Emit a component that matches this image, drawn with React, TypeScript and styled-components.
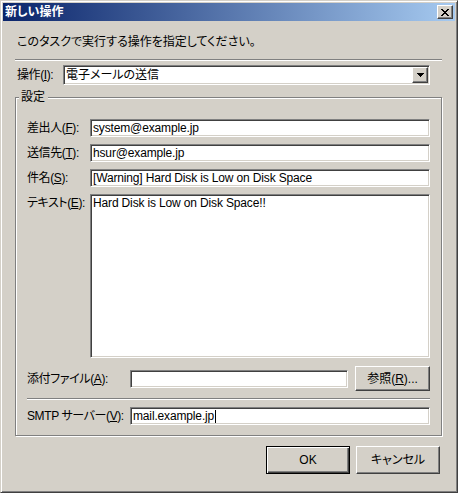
import styled, { createGlobalStyle } from "styled-components";

const GlobalStyle = createGlobalStyle`
  html, body {
    margin: 0;
    padding: 0;
    background: #D4D0C8;
    overflow: hidden;
  }
  body {
    font-family: "Liberation Sans", "Noto Sans CJK JP", sans-serif;
    font-size: 12px;
    font-feature-settings: "palt";
    color: #000;
  }
`;

const raised = `
  border: 1px solid;
  border-color: #FFFFFF #404040 #404040 #FFFFFF;
  box-shadow: inset -1px -1px 0 #808080, inset 1px 1px 0 #D4D0C8;
  background: #D4D0C8;
`;

const sunken = `
  border: 1px solid;
  border-color: #808080 #FFFFFF #FFFFFF #808080;
  box-shadow: inset 1px 1px 0 #404040, inset -1px -1px 0 #D4D0C8;
  background: #FFFFFF;
`;

const Window = styled.div`
  width: 458px;
  height: 493px;
  box-sizing: border-box;
  background: #D4D0C8;
  border: 1px solid;
  border-color: #D4D0C8 #404040 #404040 #D4D0C8;
  box-shadow: inset 1px 1px 0 #FFFFFF, inset -1px -1px 0 #808080;
  padding: 2px;
  display: flex;
  flex-direction: column;
`;

const TitleBar = styled.div`
  height: 18px;
  flex-shrink: 0;
  display: flex;
  align-items: center;
  justify-content: space-between;
  padding: 0 2px;
  background: linear-gradient(to right, #0A246A, #A6CAF0);
`;

const TitleText = styled.span`
  color: #FFFFFF;
  font-weight: bold;
  font-size: 12px;
  line-height: 14px;
`;

const CloseButton = styled.div`
  ${raised}
  width: 16px;
  height: 14px;
  box-sizing: border-box;
  display: flex;
  align-items: center;
  justify-content: center;
`;

const Body = styled.div`
  display: flex;
  flex-direction: column;
  padding: 14px 13px 0 12px;
`;

const Instruction = styled.div`
  line-height: 14px;
  padding-left: 2px;
`;

const Separator = styled.div<{ $top: number }>`
  height: 0;
  margin-top: ${(p) => p.$top}px;
  border-top: 1px solid #808080;
  border-bottom: 1px solid #FFFFFF;
`;

const ActionRow = styled.div`
  display: flex;
  align-items: center;
  height: 20px;
  margin-top: 4px;
  padding-left: 2px;
  padding-right: 12px;
`;

const Label = styled.div<{ $width: number; $top?: number }>`
  width: ${(p) => p.$width}px;
  flex-shrink: 0;
  line-height: 14px;
  white-space: nowrap;
  letter-spacing: -0.4px;
  padding-top: ${(p) => p.$top ?? 0}px;
  & u {
    text-underline-offset: 1px;
  }
`;

const Combo = styled.div`
  ${sunken}
  flex: 1;
  height: 20px;
  box-sizing: border-box;
  display: flex;
  align-items: center;
  padding: 1px 1px 1px 2px;
`;

const ComboText = styled.span`
  flex: 1;
  line-height: 14px;
`;

const DropButton = styled.div`
  ${raised}
  width: 16px;
  height: 16px;
  box-sizing: border-box;
  display: flex;
  align-items: center;
  justify-content: center;
`;

const Group = styled.div`
  position: relative;
  margin-top: 12px;
  border: 1px solid #808080;
  box-shadow: inset 1px 1px 0 #FFFFFF, 1px 1px 0 #FFFFFF;
  padding: 21px 11px 10px 11px;
  display: flex;
  flex-direction: column;
  gap: 7px;
`;

const Legend = styled.div`
  position: absolute;
  top: -8px;
  left: 3px;
  padding: 0 3px 0 2px;
  background: #D4D0C8;
  line-height: 14px;
`;

const FieldRow = styled.div<{ $height: number; $start?: boolean; $after?: number }>`
  display: flex;
  align-items: ${(p) => (p.$start ? "flex-start" : "center")};
  height: ${(p) => p.$height}px;
  margin-bottom: ${(p) => p.$after ?? 0}px;
`;

const TextBox = styled.div<{ $width?: number }>`
  ${sunken}
  ${(p) => (p.$width ? `width: ${p.$width}px;` : "flex: 1;")}
  height: 18px;
  box-sizing: border-box;
  padding: 0 2px;
  display: flex;
  align-items: center;
  white-space: nowrap;
  overflow: hidden;
  line-height: 14px;
  letter-spacing: -0.15px;
`;

const TextArea = styled.div`
  ${sunken}
  flex: 1;
  height: 164px;
  box-sizing: border-box;
  padding: 1px 2px;
  line-height: 14px;
  letter-spacing: -0.15px;
`;

const Caret = styled.span`
  display: inline-block;
  width: 1px;
  height: 13px;
  background: #000;
  margin-left: 1px;
`;

const PushButton = styled.div<{ $width: number; $height: number; $default?: boolean }>`
  ${raised}
  width: ${(p) => p.$width}px;
  height: ${(p) => p.$height}px;
  box-sizing: border-box;
  display: flex;
  align-items: center;
  justify-content: center;
  line-height: 14px;
  flex-shrink: 0;
  ${(p) =>
    p.$default
      ? `border: 1px solid #000;
         box-shadow: inset 1px 1px 0 #FFFFFF, inset -1px -1px 0 #404040, inset -2px -2px 0 #808080;`
      : ""}
  & u {
    text-underline-offset: 1px;
  }
`;

const BrowseGap = styled.div`
  width: 7px;
  flex-shrink: 0;
`;

const ButtonRow = styled.div`
  display: flex;
  justify-content: flex-end;
  gap: 6px;
  margin-top: 10px;
  padding-right: 2px;
`;

const CloseGlyph = () => (
  <svg width="8" height="7" viewBox="0 0 8 7" shapeRendering="crispEdges">
    <path
      d="M0 0h2v1H0zM6 0h2v1H6zM1 1h2v1H1zM5 1h2v1H5zM2 2h4v1H2zM3 3h2v1H3zM2 4h4v1H2zM1 5h2v1H1zM5 5h2v1H5zM0 6h2v1H0zM6 6h2v1H6z"
      fill="#000"
    />
  </svg>
);

const ArrowGlyph = () => (
  <svg width="7" height="4" viewBox="0 0 7 4" shapeRendering="crispEdges">
    <path d="M0 0h7v1H0zM1 1h5v1H1zM2 2h3v1H2zM3 3h1v1H3z" fill="#000" />
  </svg>
);

export default function App() {
  return (
    <>
      <GlobalStyle />
      <Window>
        <TitleBar>
          <TitleText>新しい操作</TitleText>
          <CloseButton>
            <CloseGlyph />
          </CloseButton>
        </TitleBar>
        <Body>
          <Instruction>このタスクで実行する操作を指定してください。</Instruction>
          <Separator $top={10} />
          <ActionRow>
            <Label $width={46}>
              操作(<u>I</u>):
            </Label>
            <Combo>
              <ComboText>電子メールの送信</ComboText>
              <DropButton>
                <ArrowGlyph />
              </DropButton>
            </Combo>
          </ActionRow>
          <Group>
            <Legend>設定</Legend>
            <FieldRow $height={18}>
              <Label $width={63}>
                差出人(<u>F</u>):
              </Label>
              <TextBox>system@example.jp</TextBox>
            </FieldRow>
            <FieldRow $height={18}>
              <Label $width={63}>
                送信先(<u>T</u>):
              </Label>
              <TextBox>hsur@example.jp</TextBox>
            </FieldRow>
            <FieldRow $height={18}>
              <Label $width={63}>
                件名(<u>S</u>):
              </Label>
              <TextBox>[Warning] Hard Disk is Low on Disk Space</TextBox>
            </FieldRow>
            <FieldRow $height={164} $start $after={1}>
              <Label $width={63} $top={2}>
                テキスト(<u>E</u>):
              </Label>
              <TextArea>Hard Disk is Low on Disk Space!!</TextArea>
            </FieldRow>
            <FieldRow $height={25}>
              <Label $width={103}>
                添付ファイル(<u>A</u>):
              </Label>
              <TextBox $width={218} />
              <BrowseGap />
              <PushButton $width={75} $height={25}>
                参照(<u>R</u>)...
              </PushButton>
            </FieldRow>
            <Separator $top={0} />
            <FieldRow $height={18}>
              <Label $width={103}>
                SMTP サーバー(<u>V</u>):
              </Label>
              <TextBox>
                mail.example.jp
                <Caret />
              </TextBox>
            </FieldRow>
          </Group>
          <ButtonRow>
            <PushButton $width={84} $height={28} $default>
              OK
            </PushButton>
            <PushButton $width={84} $height={28}>
              キャンセル
            </PushButton>
          </ButtonRow>
        </Body>
      </Window>
    </>
  );
}
